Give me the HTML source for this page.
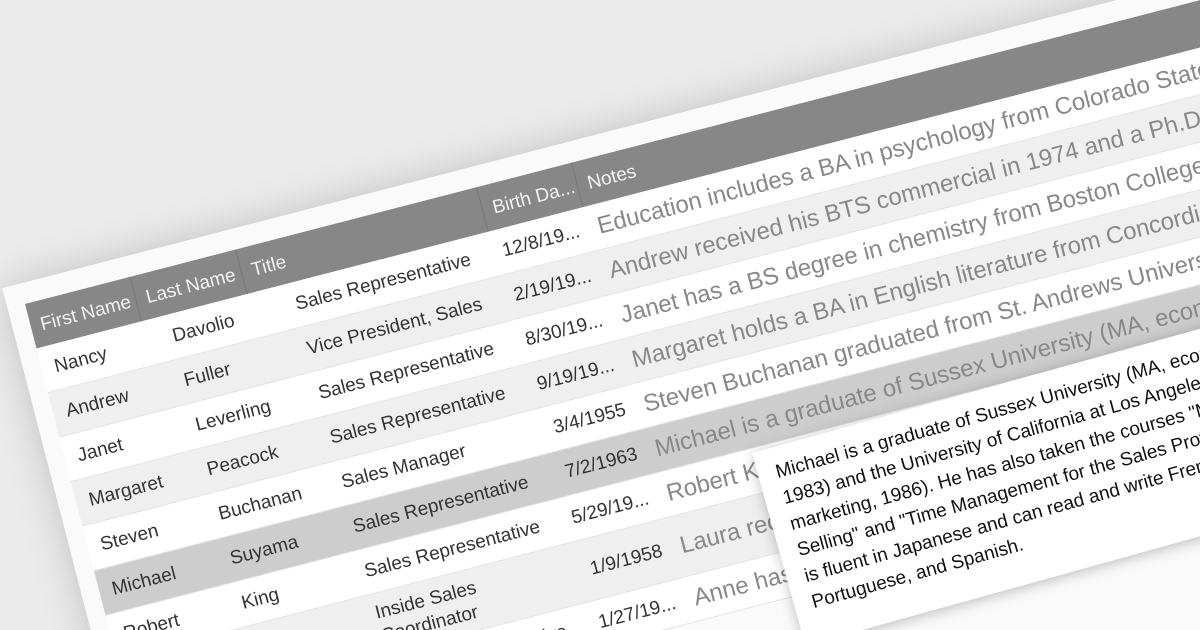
<!DOCTYPE html>
<html><head><meta charset="utf-8"><style>
html,body{margin:0;padding:0;width:1200px;height:630px;overflow:hidden}
body{background:#ebebeb;font-family:"Liberation Sans",sans-serif}
.clip{position:relative;width:1200px;height:630px;overflow:hidden}
.frame{position:absolute;left:25px;top:304px;transform-origin:0 0;transform:rotate(-14.5deg)}
.card{position:absolute;left:-18px;top:-21px;width:1900px;height:700px;background:#fafafa;box-shadow:0 0 40px rgba(0,0,0,.18)}
.hdr{position:absolute;left:0;top:0;width:1850px;height:46px;background:#878787}
.hdr span{position:absolute;top:0;height:46px;line-height:50px;color:#f2f2f2;font-size:19px;padding-left:10px;box-sizing:border-box;border-right:1px solid #777}
.row{position:absolute;left:0;width:1850px;height:46px;background:#fff;border-bottom:1px solid #e2e2e2;box-sizing:border-box}
.row.alt{background:#efefef}
.row.sel{background:#cdcdcd}
.row span{position:absolute;white-space:nowrap;color:#333;font-size:19px;line-height:46px;top:0}
.row .n{color:#888;font-size:24px;left:574px}
.row .d{text-align:right;width:120px;left:435px;font-size:19px}
.tip{position:absolute;left:752px;top:453px;transform-origin:0 0;transform:rotate(-15.5deg);width:700px;height:200px;background:#fff;box-shadow:0 2px 14px rgba(0,0,0,.25)}
.tip div{position:absolute;left:18px;top:12px;font-size:19px;line-height:27px;color:#111;white-space:nowrap}
</style></head><body><div class="clip">
<div class="frame">
  <div class="card"></div>
  <div class="hdr">
    <span style="left:0;width:109px">First Name</span>
    <span style="left:109px;width:109px">Last Name</span>
    <span style="left:218px;width:249px">Title</span>
    <span style="left:467px;width:98px">Birth Da...</span>
    <span style="left:565px;width:1285px;border-right:none">Notes</span>
  </div>
  <div class="row" style="top:46px"><span style="left:13px">Nancy</span><span style="left:135px">Davolio</span><span style="left:262px">Sales Representative</span><span class="d">12/8/19...</span><span class="n">Education includes a BA in psychology from Colorado State University in 1970.</span></div>
  <div class="row alt" style="top:92px"><span style="left:13px">Andrew</span><span style="left:135px">Fuller</span><span style="left:262px">Vice President, Sales</span><span class="d">2/19/19...</span><span class="n">Andrew received his BTS commercial in 1974 and a Ph.D. in international marketing.</span></div>
  <div class="row" style="top:138px"><span style="left:13px">Janet</span><span style="left:135px">Leverling</span><span style="left:262px">Sales Representative</span><span class="d">8/30/19...</span><span class="n">Janet has a BS degree in chemistry from Boston College (1984).</span></div>
  <div class="row alt" style="top:184px"><span style="left:13px">Margaret</span><span style="left:135px">Peacock</span><span style="left:262px">Sales Representative</span><span class="d">9/19/19...</span><span class="n">Margaret holds a BA in English literature from Concordia College (1958).</span></div>
  <div class="row" style="top:230px"><span style="left:13px">Steven</span><span style="left:135px">Buchanan</span><span style="left:262px">Sales Manager</span><span class="d">3/4/1955</span><span class="n">Steven Buchanan graduated from St. Andrews University, Scotland, with a BSC degree.</span></div>
  <div class="row sel" style="top:276px"><span style="left:13px">Michael</span><span style="left:135px">Suyama</span><span style="left:262px">Sales Representative</span><span class="d">7/2/1963</span><span class="n">Michael is a graduate of Sussex University (MA, economics, 1983).</span></div>
  <div class="row" style="top:322px"><span style="left:13px">Robert</span><span style="left:135px">King</span><span style="left:262px">Sales Representative</span><span class="d">5/29/19...</span><span class="n">Robert King served in the Peace Corps.</span></div>
  <div class="row alt" style="top:368px;height:62px"><span style="left:13px;line-height:62px">Laura</span><span style="left:135px;line-height:62px">Callahan</span><span style="left:262px;line-height:24px;top:8px">Inside Sales<br>Coordinator</span><span class="d" style="line-height:62px">1/9/1958</span><span class="n" style="line-height:62px">Laura received a BA in psychology.</span></div>
  <div class="row" style="top:430px"><span style="left:13px">Anne</span><span style="left:135px">Dodsworth</span><span style="left:262px">Sales Representative</span><span class="d">1/27/19...</span><span class="n">Anne has a BA degree in English.</span></div>
</div>
<div class="tip"><div>Michael is a graduate of Sussex University (MA, economics,<br>1983) and the University of California at Los Angeles (MBA,<br>marketing, 1986). He has also taken the courses "Multi-Cultural<br>Selling" and "Time Management for the Sales Professional." He<br>is fluent in Japanese and can read and write French,<br>Portuguese, and Spanish.</div></div>
</div></body></html>
